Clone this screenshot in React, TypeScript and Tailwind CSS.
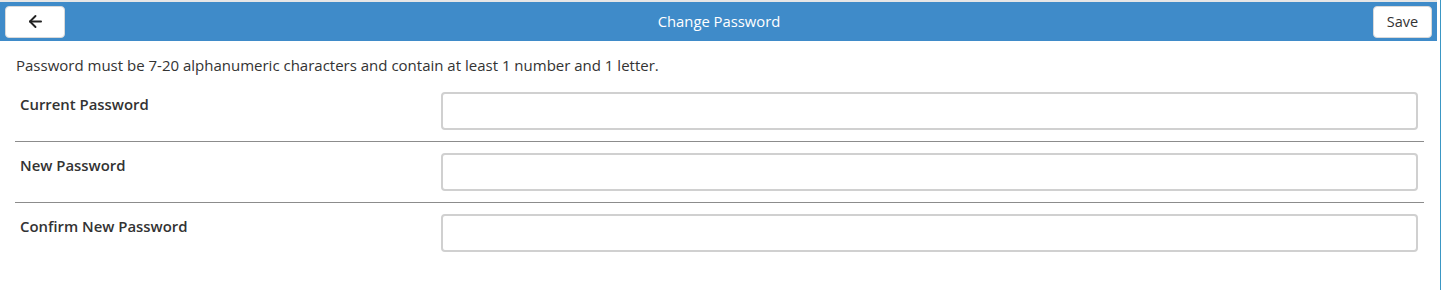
import { ArrowLeft } from 'lucide-react'

const fields = ['Current Password', 'New Password', 'Confirm New Password']

export default function App() {
  return (
    <div
      className="h-[290px] w-full bg-white border-r-[1px] border-[#3b97c4] pr-[3px] text-[#333]"
      style={{ fontFamily: '"Open Sans", "Noto Sans", sans-serif' }}
    >
      <div className="border-t-2 border-[#e6e6e6]">
        <div className="h-[39px] bg-[#3f8bc9] flex items-center justify-between px-[5px]">
          <button className="w-[60px] h-[32px] bg-white rounded-[4px] border border-[#d9d9d9] flex items-center justify-center">
            <ArrowLeft size={19} strokeWidth={2.4} className="text-[#222]" />
          </button>
          <h1 className="text-[14.8px] text-white">Change Password</h1>
          <button className="w-[59px] h-[32px] bg-white rounded-[4px] border border-[#d9d9d9] text-[14.5px] text-[#333]">
            Save
          </button>
        </div>
      </div>

      <p className="text-[15px] pl-[16px] pt-[14px] leading-[20px]">
        Password must be 7-20 alphanumeric characters and contain at least 1 number and 1 letter.
      </p>

      <div className="ml-[15px] mr-[13px] mt-[6px]">
        {fields.map((f, i) => (
          <div
            key={f}
            className={`flex py-[11px] ${i < fields.length - 1 ? 'border-b border-[#8c8c8c]' : ''}`}
          >
            <label className="w-[426px] pl-[5px] pt-[2px] text-[14.9px] font-semibold leading-[20px]">{f}</label>
            <input
              type="password"
              className="flex-1 mr-[6px] h-[38px] border-2 border-[#d0d0d0] rounded-[4px] outline-none"
            />
          </div>
        ))}
      </div>
    </div>
  )
}
